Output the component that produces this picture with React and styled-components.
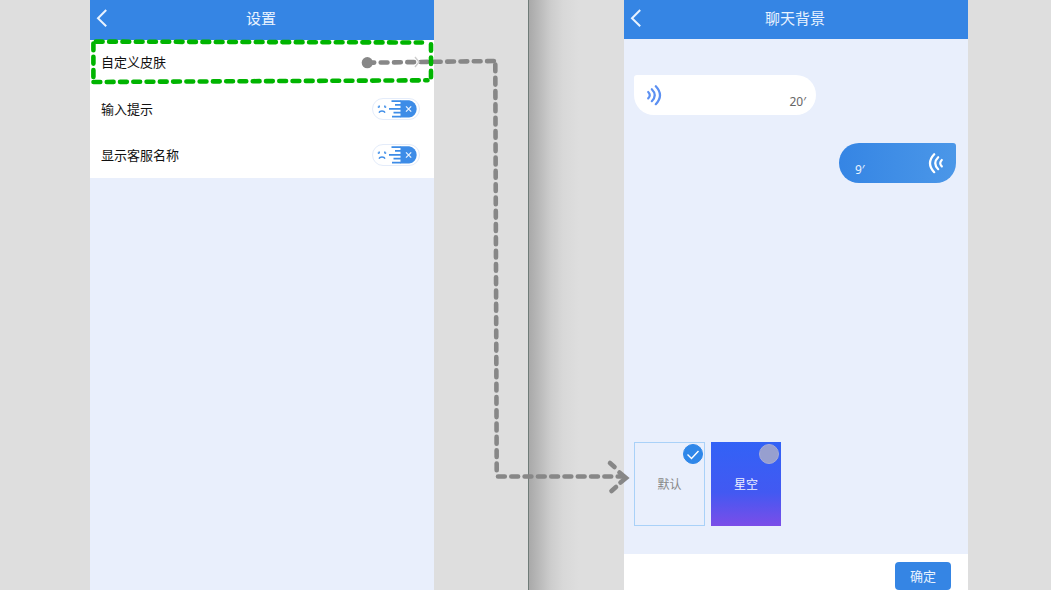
import React from 'react';
import styled, { createGlobalStyle } from 'styled-components';

const GlobalStyle = createGlobalStyle`
  * { box-sizing: border-box; }
  body {
    margin: 0;
    background: #dedede;
    font-family: "Noto Sans CJK SC", "Noto Sans", sans-serif;
  }
  button { font-family: inherit; }
`;

const Board = styled.main`
  position: relative;
  display: grid;
  grid-template-columns: 529fr 522fr;
  min-height: 100vh;
  overflow: hidden;
`;

const Pane = styled.section`
  display: grid;
  grid-template-columns: ${(p) => p.$columns};
  background: ${(p) => p.$background};
  border-right: ${(p) => (p.$divided ? '1px solid #6f7b78' : 'none')};
`;

const Phone = styled.article`
  grid-column: 2;
  display: flex;
  flex-direction: column;
  background: #e9effc;
`;

const Header = styled.header`
  display: grid;
  grid-template-columns: 24px 1fr 26px;
  align-items: center;
  height: ${(p) => p.$height};
  padding-bottom: 4px;
  background: #3585e4;
  color: #e9f3ff;
`;

const BackButton = styled.button`
  display: flex;
  padding: 0 0 0 6px;
  border: 0;
  background: none;
  color: inherit;
`;

const Title = styled.h1`
  margin: 0;
  font-size: 15px;
  line-height: 20px;
  font-weight: 400;
  text-align: center;
`;

const Settings = styled.ul`
  margin: 0;
  padding: 0;
  list-style: none;
  background: #fff;
`;

const SettingRow = styled.li`
  display: flex;
  height: 46px;
  padding: 0 14px 0 11px;
`;

const rowContent = `
  display: flex;
  flex: 1;
  align-items: center;
  justify-content: space-between;
  color: #111;
  font-size: 13px;
  line-height: 20px;
`;

const SettingLink = styled.a`
  ${rowContent}
  padding-bottom: 2px;
  text-decoration: none;
`;

const Chevron = styled.svg`
  position: relative;
  z-index: 1;
`;

const SettingLabel = styled.label`
  ${rowContent}
`;

const SwitchBox = styled.span`
  display: grid;
  width: 48px;
  height: 22px;

  > * { grid-area: 1 / 1; }
`;

const SwitchInput = styled.input`
  appearance: none;
  width: 48px;
  height: 22px;
  margin: 0;
  border: 1px solid #e4ecfa;
  border-radius: 11px;
  background: #fff;
`;

const SwitchArt = styled.svg`
  position: relative;
  pointer-events: none;
`;

const Messages = styled.div`
  display: flex;
  flex: 1;
  flex-direction: column;
  gap: 28px;
  padding: 36px 12px 0 10px;
`;

const Bubble = styled.button`
  display: flex;
  align-items: center;
  justify-content: space-between;
  flex-direction: ${(p) => (p.$own ? 'row-reverse' : 'row')};
  align-self: ${(p) => (p.$own ? 'flex-end' : 'flex-start')};
  width: ${(p) => (p.$own ? '117px' : '182px')};
  height: 40px;
  padding: ${(p) => (p.$own ? '0 12px 0 16px' : '0 10px 0 12px')};
  border: 0;
  border-radius: ${(p) => (p.$own ? '20px 3px 20px 20px' : '3px 20px 20px 20px')};
  background: ${(p) => (p.$own ? 'linear-gradient(90deg, #3585e4, #4b97e8)' : '#fff')};
  color: ${(p) => (p.$own ? '#e9f3ff' : '#666')};
`;

const Duration = styled.span`
  padding-top: 14px;
  font-family: "Noto Sans", sans-serif;
  font-size: 12px;
  line-height: 16px;
`;

const Skins = styled.div`
  display: flex;
  gap: 6px;
  padding: 0 10px 28px;
`;

const Skin = styled.label`
  display: flex;
  position: relative;
  align-items: center;
  justify-content: center;
  width: ${(p) => (p.$starry ? '70px' : '71px')};
  height: 84px;
  border: 1px solid ${(p) => (p.$starry ? 'transparent' : '#a9d1f8')};
  background: ${(p) => (p.$starry ? 'linear-gradient(#3262f6, #4259f2 60%, #7b4de8) border-box' : 'transparent')};
  color: ${(p) => (p.$starry ? '#eef0ff' : '#888')};
  font-size: 12px;
  line-height: 16px;
`;

const SkinRadio = styled.input`
  appearance: none;
  position: absolute;
  top: 1px;
  right: 1px;
  width: 20px;
  height: 20px;
  margin: 0;
  border: 1px solid #a7abd6;
  border-radius: 50%;
  background: #979fcf;

  &:checked {
    border-color: #2f87e9;
    background: #2f87e9;
  }
`;

const SkinTick = styled.svg`
  position: absolute;
  top: 1px;
  right: 1px;
  pointer-events: none;
`;

const Footer = styled.footer`
  display: flex;
  justify-content: flex-end;
  padding: 8px 17px 0 0;
  background: #fff;
`;

const ConfirmButton = styled.button`
  width: 56px;
  height: 28px;
  padding: 0;
  border: 0;
  border-radius: 4px;
  background: #3585e4;
  color: #e9f3ff;
  font-size: 13px;
  line-height: 20px;
`;

const Annotation = styled.svg`
  position: absolute;
  top: 0;
  left: 0;
  width: 100%;
  height: 590px;
  pointer-events: none;
`;

function Back() {
  return (
    <BackButton type="button" aria-label="返回">
      <svg width="12" height="18" viewBox="0 0 12 18" fill="none" stroke="currentColor" strokeWidth="2">
        <path d="M10.2 1 2 9.2l8.2 8" />
      </svg>
    </BackButton>
  );
}

function Switch({ label }) {
  return (
    <SwitchBox>
      <SwitchInput type="checkbox" role="switch" aria-label={label} />
      <SwitchArt width="48" height="22" viewBox="0 0 48 22" fill="none">
        <path d="M28.5 2.2h8.7a8.8 8.8 0 0 1 0 17.4h-8.7Z" fill="#3d8ce7" />
        <path
          d="M19.5 3.2H29M23 6.9h6M17 10.9h12M21.5 14.7H29M20 18.6h9"
          stroke="#3d8ce7"
          strokeWidth="1.8"
        />
        <path d="m34 8.4 5.2 5.2m0-5.2L34 13.6" stroke="#e6f1ff" strokeWidth="1.3" />
        <path d="M7.2 7.4v2M12.8 7.4v2M5.8 9.4l1.2-.6M14.2 9.4l-1.2-.6" stroke="#3d8ce7" strokeWidth="1.4" />
        <path d="M7 14.6c1-2.2 5-2.2 6 0" stroke="#3d8ce7" strokeWidth="1.5" />
      </SwitchArt>
    </SwitchBox>
  );
}

function Waves({ flipped }) {
  return (
    <svg width="16" height="22" viewBox="0 0 16 22" fill="none" stroke={flipped ? '#fff' : '#5c90f2'} strokeWidth="2.2" strokeLinecap="round">
      <g transform={flipped ? 'matrix(-1 0 0 1 16 0)' : undefined}>
        <path d="M2.2 8q3.2 3.2 0 6.4" />
        <path d="M5.8 5.2q6 6 0 12" />
        <path d="M9.8 2.2q8.4 9 0 18" />
      </g>
    </svg>
  );
}

export default function App() {
  return (
    <>
      <GlobalStyle />
      <Board>
        <Pane $columns="90fr 344fr 94fr" $background="#dedede" $divided>
          <Phone>
            <Header $height="40px">
              <Back />
              <Title>设置</Title>
            </Header>
            <Settings>
              <SettingRow>
                <SettingLink href="#skin">
                  自定义皮肤
                  <Chevron width="8" height="12" viewBox="0 0 8 12" fill="none" stroke="#ccc" strokeWidth="1.4">
                    <path d="m3 1 4 5-4 5" />
                  </Chevron>
                </SettingLink>
              </SettingRow>
              <SettingRow>
                <SettingLabel>输入提示<Switch label="输入提示" /></SettingLabel>
              </SettingRow>
              <SettingRow>
                <SettingLabel>显示客服名称<Switch label="显示客服名称" /></SettingLabel>
              </SettingRow>
            </Settings>
          </Phone>
        </Pane>

        <Pane
          $columns="95fr 344fr 83fr"
          $background="linear-gradient(90deg, #a9a9a9, #b9b9b9 10px, #cdcdcd 22px, #d8d8d8 34px, #dedede 50px)"
        >
          <Phone>
            <Header $height="39px">
              <Back />
              <Title>聊天背景</Title>
            </Header>
            <Messages>
              <Bubble type="button"><Waves /><Duration>20′</Duration></Bubble>
              <Bubble type="button" $own><Waves flipped /><Duration>9′</Duration></Bubble>
            </Messages>
            <Skins>
              <Skin>
                默认
                <SkinRadio type="radio" name="skin" defaultChecked />
                <SkinTick width="20" height="20" viewBox="0 0 20 20" fill="none" stroke="#fff" strokeWidth="1.4">
                  <path d="m4.5 10.5 4 4 7-7.5" />
                </SkinTick>
              </Skin>
              <Skin $starry>
                星空
                <SkinRadio type="radio" name="skin" />
              </Skin>
            </Skins>
            <Footer>
              <ConfirmButton type="button">确定</ConfirmButton>
            </Footer>
          </Phone>
        </Pane>

        <Annotation viewBox="0 0 1051 590" preserveAspectRatio="none" fill="none" strokeLinecap="round" aria-hidden="true">
          <g stroke="#878787" strokeWidth="4.6">
            <circle cx="367.3" cy="62.7" r="5.6" fill="#878787" stroke="none" />
            <path d="M368 62.7 495 61" strokeDasharray="6.8 6.5" strokeDashoffset="0.6" />
            <path d="M495.3 64.5 496.7 471" strokeDasharray="6.8 6.5" />
            <path d="M498 476.5H622" strokeDasharray="6.8 6.5" />
            <path d="m610 463 4.5 4M619.5 472.5l6.5 5.5-5.5 4.5M616 487l-4.5 4" />
          </g>
          <g stroke="#00b400" strokeWidth="4.6">
            <path d="M95.8 41.6 422 42.5" strokeDasharray="6.8 6.53" />
            <path d="M93.4 43.5V78" strokeDasharray="6.8 6.5" />
            <path d="M431 44.3V78" strokeDasharray="6.4 6.9" />
            <path d="M93.5 82 427.5 80.3" strokeDasharray="6.8 6.47" />
          </g>
        </Annotation>
      </Board>
    </>
  );
}
